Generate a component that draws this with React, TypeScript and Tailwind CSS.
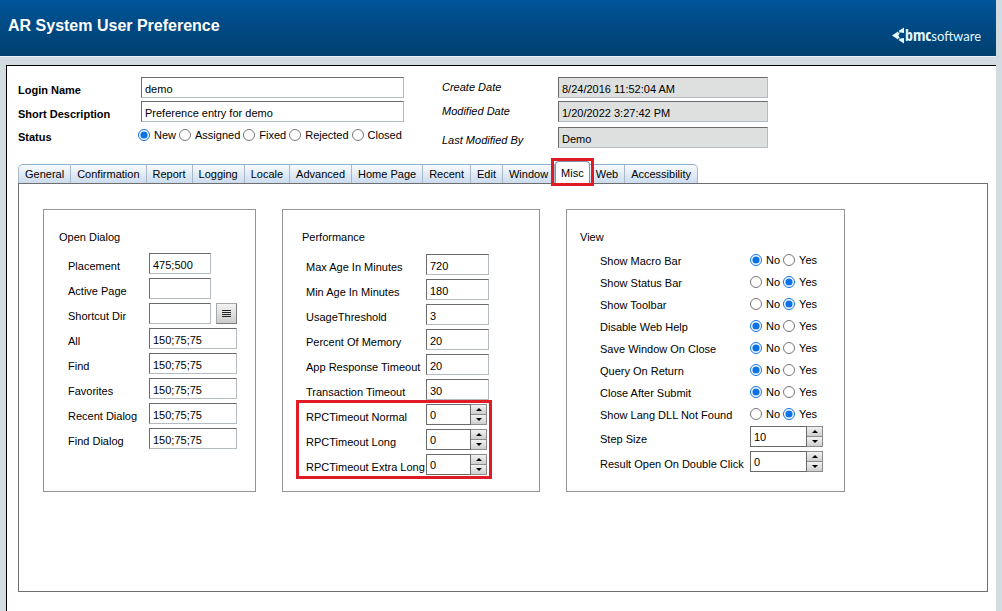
import { useState, type ReactNode } from "react";

const tabs = [
  "General",
  "Confirmation",
  "Report",
  "Logging",
  "Locale",
  "Advanced",
  "Home Page",
  "Recent",
  "Edit",
  "Window",
  "Misc",
  "Web",
  "Accessibility",
];

const viewOptions = [
  { label: "Show Macro Bar", value: "No" },
  { label: "Show Status Bar", value: "Yes" },
  { label: "Show Toolbar", value: "Yes" },
  { label: "Disable Web Help", value: "No" },
  { label: "Save Window On Close", value: "No" },
  { label: "Query On Return", value: "No" },
  { label: "Close After Submit", value: "No" },
  { label: "Show Lang DLL Not Found", value: "Yes" },
];

const fieldClass =
  "h-[21px] border border-t-[#6b6b6b] border-l-[#6b6b6b] border-r-[#b4bcc2] border-b-[#b4bcc2] px-[3px] pt-[2px] outline-none";

function toId(label: string) {
  return label.toLowerCase().replace(/\s+/g, "-");
}

function Logo() {
  return (
    <div className="flex items-center text-[#e4f8ff]">
      <svg viewBox="0 0 13 17" className="h-[17px] w-[13px]" fill="currentColor">
        <path d="M0 8.5 L6 4.6 V12.4 Z" />
        <path d="M6.6 4 L12 .5 V6 L8.4 5.6 Z" />
        <path d="M6.6 13 L12 16.5 V11 L8.4 11.4 Z" />
        <path d="M5.4 5.4 L8 5.6 L6.4 8.5 L8 11.4 L5.4 11.6 Z" />
      </svg>
      <span className="flex items-baseline leading-5">
        <b className="font-['Open_Sans_Condensed','Open_Sans',sans-serif] text-[16px] font-bold">
          bmc
        </b>
        <span className="font-['Lato',sans-serif] text-[13px]">software</span>
      </span>
    </div>
  );
}

function RadioGroup({
  name,
  options,
  initial,
}: {
  name: string;
  options: string[];
  initial: string;
}) {
  const [value, setValue] = useState(initial);
  return (
    <div role="radiogroup" aria-label={name} className="flex items-center gap-[3px]">
      {options.map((option) => (
        <label key={option} className="flex items-center gap-1">
          <input
            type="radio"
            name={name}
            checked={value === option}
            onChange={() => setValue(option)}
            className="m-0 size-3 accent-[#0d72e6]"
          />
          {option}
        </label>
      ))}
    </div>
  );
}

function Row({ label, children }: { label: string; children: ReactNode }) {
  return (
    <div className="flex h-[21px]">
      <label htmlFor={toId(label)} className="flex-1 pt-[6px] whitespace-nowrap">
        {label}
      </label>
      {children}
    </div>
  );
}

function Spinner({ id, initial }: { id: string; initial: number }) {
  const [value, setValue] = useState(initial);
  const buttonClass =
    "flex flex-1 items-center justify-center border-r border-b border-[#8c8c8c] bg-linear-to-b from-[#f2f2f2] to-[#cfcfcf]";
  return (
    <div className="flex h-[21px]">
      <input
        id={id}
        value={value}
        onChange={(e) => setValue(Number(e.target.value) || 0)}
        className="w-full min-w-0 border border-[#6b6b6b] px-[3px] outline-none"
      />
      <div className="flex w-4 shrink-0 flex-col border-t border-[#8c8c8c]">
        <button
          type="button"
          aria-label="Increase"
          className={buttonClass}
          onClick={() => setValue(value + 1)}
        >
          <svg viewBox="0 0 6 3" className="h-[3px] w-[6px]">
            <path d="M0 3 L3 0 L6 3 Z" />
          </svg>
        </button>
        <button
          type="button"
          aria-label="Decrease"
          className={buttonClass}
          onClick={() => setValue(value - 1)}
        >
          <svg viewBox="0 0 6 3" className="h-[3px] w-[6px]">
            <path d="M0 0 L3 3 L6 0 Z" />
          </svg>
        </button>
      </div>
    </div>
  );
}

function SummaryForm() {
  return (
    <div className="flex flex-wrap gap-x-[38px]">
      <div className="flex flex-col gap-[3px]">
        <div className="flex">
          <label htmlFor="login" className="w-[123px] pt-[6px] font-bold">
            Login Name
          </label>
          <input id="login" defaultValue="demo" className={`${fieldClass} w-[263px]`} />
        </div>
        <div className="flex">
          <label htmlFor="description" className="w-[123px] pt-[6px] font-bold">
            Short Description
          </label>
          <input
            id="description"
            defaultValue="Preference entry for demo"
            className={`${fieldClass} w-[263px]`}
          />
        </div>
        <div className="flex h-5">
          <span className="w-[120px] pt-[5px] font-bold">Status</span>
          <RadioGroup
            name="Status"
            options={["New", "Assigned", "Fixed", "Rejected", "Closed"]}
            initial="New"
          />
        </div>
      </div>

      <div>
        <div className="mb-[3px] flex">
          <label htmlFor="created" className="w-[116px] pt-[3px] italic">
            Create Date
          </label>
          <input
            id="created"
            readOnly
            value="8/24/2016 11:52:04 AM"
            className={`${fieldClass} w-[210px] bg-[#dde0df]`}
          />
        </div>
        <div className="mb-[5px] flex">
          <label htmlFor="modified" className="w-[116px] pt-[3px] italic">
            Modified Date
          </label>
          <input
            id="modified"
            readOnly
            value="1/20/2022 3:27:42 PM"
            className={`${fieldClass} w-[210px] bg-[#dde0df]`}
          />
        </div>
        <div className="flex">
          <label htmlFor="modified-by" className="w-[116px] pt-[6px] italic">
            Last Modified By
          </label>
          <input
            id="modified-by"
            readOnly
            value="Demo"
            className={`${fieldClass} w-[210px] bg-[#dde0df]`}
          />
        </div>
      </div>
    </div>
  );
}

function TabStrip() {
  const [active, setActive] = useState("Misc");
  return (
    <div role="tablist" className="mt-[13px] flex h-[22px] items-end">
      {tabs.map((tab) => (
        <div
          key={tab}
          className="relative flex first:*:rounded-tl-[5px] first:*:border-l last:*:rounded-tr-[5px]"
        >
          <button
            type="button"
            role="tab"
            aria-selected={tab === active}
            onClick={() => setActive(tab)}
            className={
              tab === active
                ? "relative z-10 -mb-px h-[23px] rounded-t-[4px] border border-b-0 border-[#7f93a8] bg-white px-[5px] pb-px"
                : "h-[19px] border-t border-r border-t-[#8fb0d0] border-r-[#a9b8c6] border-l-[#a9b8c6] bg-linear-to-b from-[#f8fbfe] to-[#cbdcee] px-[6px]"
            }
          >
            {tab}
          </button>
          {tab === "Misc" && (
            <div className="pointer-events-none absolute -inset-x-[4px] -top-[3px] -bottom-[3px] z-20 border-3 border-[#e01b24]" />
          )}
        </div>
      ))}
    </div>
  );
}

function OpenDialogBox() {
  return (
    <section className="h-[283px] w-[213px] border border-[#949494] pt-5 pr-[18px] pl-[15px]">
      <h2>Open Dialog</h2>
      <div className="mt-[9px] flex flex-col gap-1 pl-[9px]">
        <Row label="Placement">
          <div className="w-[88px]">
            <input id="placement" defaultValue="475;500" className={`${fieldClass} w-[62px]`} />
          </div>
        </Row>
        <Row label="Active Page">
          <div className="w-[88px]">
            <input id="active-page" className={`${fieldClass} w-[62px]`} />
          </div>
        </Row>
        <Row label="Shortcut Dir">
          <div className="flex w-[88px] justify-between">
            <input id="shortcut-dir" className={`${fieldClass} w-[62px]`} />
            <button
              type="button"
              aria-label="Shortcut menu"
              className="flex size-[21px] items-center justify-center border border-[#a8a8a8] border-r-[#7c7c7c] border-b-[#7c7c7c] bg-linear-to-b from-[#f4f4f4] to-[#cccccc]"
            >
              <svg viewBox="0 0 9 8" className="h-2 w-[9px]">
                <path d="M0 .5H9M0 2.5H9M0 4.5H9M0 6.5H9" stroke="#222" />
              </svg>
            </button>
          </div>
        </Row>
        {["All", "Find", "Favorites", "Recent Dialog", "Find Dialog"].map((label) => (
          <Row key={label} label={label}>
            <input
              id={toId(label)}
              defaultValue="150;75;75"
              className={`${fieldClass} w-[88px]`}
            />
          </Row>
        ))}
      </div>
    </section>
  );
}

function PerformanceBox() {
  const fields = [
    ["Max Age In Minutes", "720"],
    ["Min Age In Minutes", "180"],
    ["UsageThreshold", "3"],
    ["Percent Of Memory", "20"],
    ["App Response Timeout", "20"],
    ["Transaction Timeout", "30"],
  ];
  return (
    <section className="h-[283px] w-[258px] border border-[#949494] pt-5 pr-[50px] pl-[19px]">
      <h2>Performance</h2>
      <div className="mt-[10px] flex flex-col gap-1 pl-[4px]">
        {fields.map(([label, value]) => (
          <Row key={label} label={label}>
            <input id={toId(label)} defaultValue={value} className={`${fieldClass} w-[63px]`} />
          </Row>
        ))}
        <div className="relative flex flex-col gap-1">
          {["RPCTimeout Normal", "RPCTimeout Long", "RPCTimeout Extra Long"].map((label) => (
            <Row key={label} label={label}>
              <div className="w-[63px] pr-[2px]">
                <Spinner id={toId(label)} initial={0} />
              </div>
            </Row>
          ))}
          <div className="pointer-events-none absolute -top-1 -right-[3px] -bottom-1 -left-[10px] border-3 border-[#e01b24]" />
        </div>
      </div>
    </section>
  );
}

function ViewBox() {
  return (
    <section className="h-[283px] w-[279px] border border-[#949494] pt-5 pr-[21px] pl-[13px]">
      <h2>View</h2>
      <div className="mt-[5px] pl-5">
        {viewOptions.map((option) => (
          <div key={option.label} className="flex h-[22px] items-center">
            <span className="flex-1 pt-[2px]">{option.label}</span>
            <div className="w-[73px]">
              <RadioGroup
                name={option.label}
                options={["No", "Yes"]}
                initial={option.value}
              />
            </div>
          </div>
        ))}
        <div className="mt-px flex flex-col gap-1">
          <Row label="Step Size">
            <div className="w-[73px]">
              <Spinner id="step-size" initial={10} />
            </div>
          </Row>
          <Row label="Result Open On Double Click">
            <div className="w-[73px]">
              <Spinner id="result-open-on-double-click" initial={0} />
            </div>
          </Row>
        </div>
      </div>
    </section>
  );
}

export default function App() {
  return (
    <div className="flex min-h-screen flex-col bg-[#d3dde1] pr-[6px] font-['Liberation_Sans',Arial,sans-serif] text-[11px] leading-[14px] text-black">
      <header className="flex h-[57px] items-start justify-between border-b border-[#e6f3f8] bg-linear-to-b from-[#00549a] to-[#003f6e] pr-[15px] pl-2">
        <h1 className="pt-[16px] text-[16px] leading-5 font-bold text-white">
          AR System User Preference
        </h1>
        <div className="pt-[25px]">
          <Logo />
        </div>
      </header>

      <main className="mt-2 ml-[6px] flex flex-1 flex-col border-t border-l border-black bg-white pt-[11px] pr-2 pb-[19px] pl-[11px]">
        <SummaryForm />
        <TabStrip />
        <div
          role="tabpanel"
          className="flex flex-1 flex-wrap content-start gap-[26px] border border-[#6e6e6e] pt-[25px] pl-6"
        >
          <OpenDialogBox />
          <PerformanceBox />
          <ViewBox />
        </div>
      </main>
    </div>
  );
}
